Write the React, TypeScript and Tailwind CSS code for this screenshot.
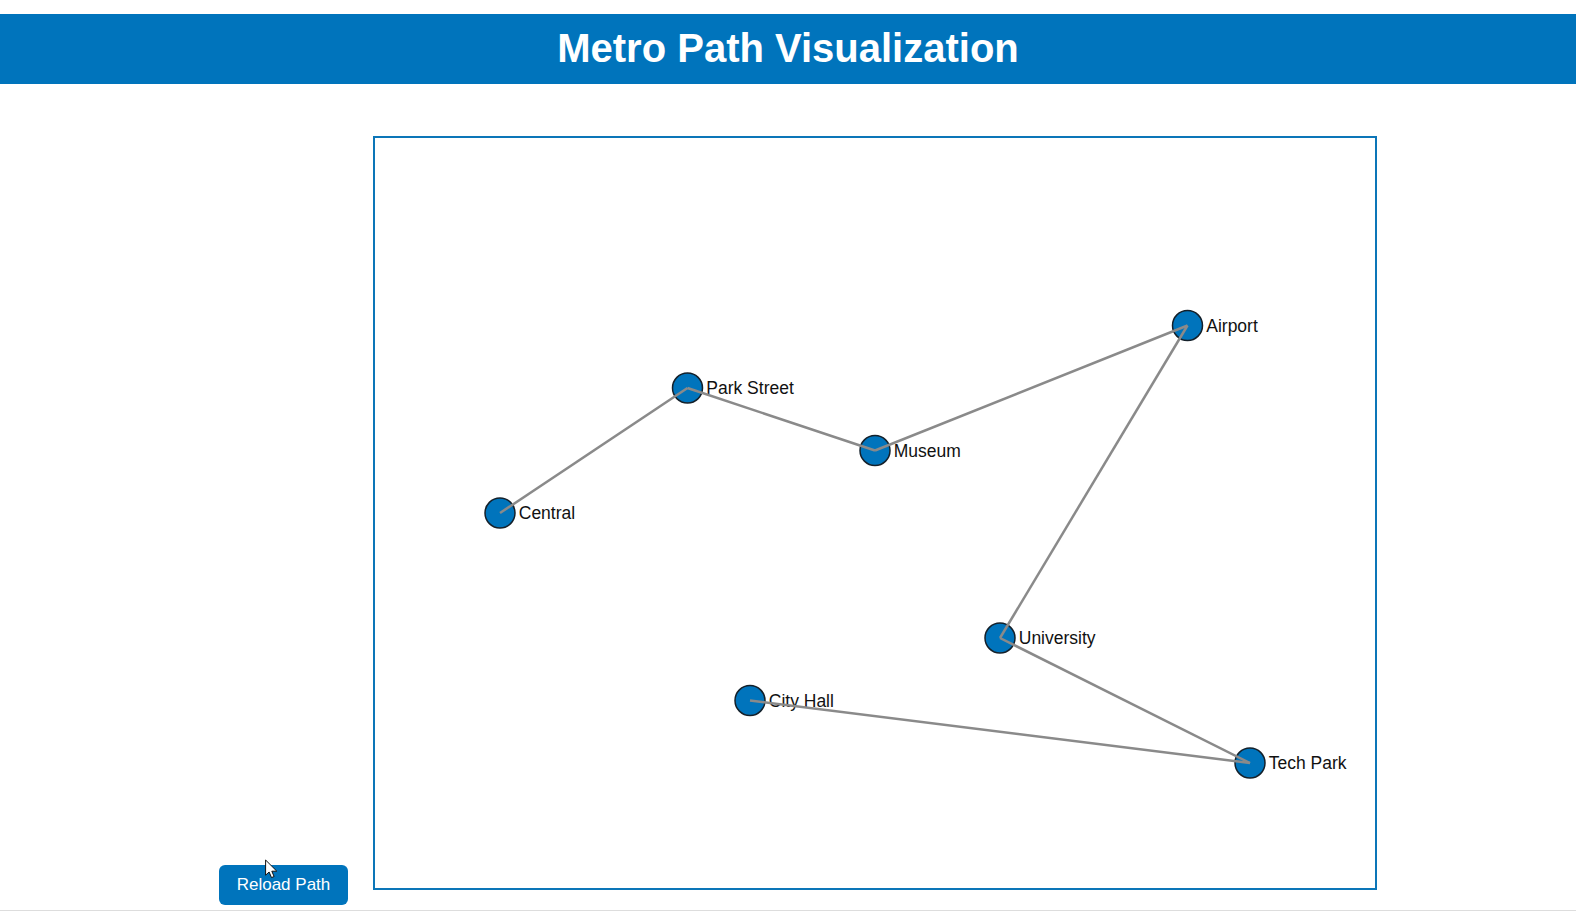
import { useState } from "react";

type Station = { name: string; x: number; y: number };

const stations: Station[] = [
  { name: "Central", x: 100, y: 300 },
  { name: "Park Street", x: 250, y: 200 },
  { name: "Museum", x: 400, y: 250 },
  { name: "Airport", x: 650, y: 150 },
  { name: "University", x: 500, y: 400 },
  { name: "Tech Park", x: 700, y: 500 },
  { name: "City Hall", x: 300, y: 450 },
];

function MetroMap() {
  return (
    <svg
      viewBox="0 0 800 600"
      role="img"
      aria-label="Metro path"
      className="block w-full"
    >
      {stations.map((s) => (
        <g key={s.name}>
          <circle cx={s.x} cy={s.y} r={12} fill="#0074bc" stroke="#14202a" strokeWidth={1.2} />
          <text x={s.x + 15} y={s.y + 5} fontSize={14} fill="#111">
            {s.name}
          </text>
        </g>
      ))}
      {stations.slice(1).map((s, i) => (
        <line
          key={s.name}
          x1={stations[i].x}
          y1={stations[i].y}
          x2={s.x}
          y2={s.y}
          stroke="#8a8a8a"
          strokeWidth={2}
        />
      ))}
    </svg>
  );
}

function Cursor() {
  return (
    <svg
      viewBox="0 0 13 20"
      aria-hidden="true"
      className="pointer-events-none absolute -top-1.5 left-[46px] h-5 w-[13px]"
    >
      <path
        d="M.6 1v15.2l3.5-3.2 2.4 5.6 2.6-1.1-2.3-5.3h5z"
        fill="#fff"
        stroke="#111"
        strokeWidth="1"
      />
    </svg>
  );
}

export default function App() {
  const [run, setRun] = useState(0);
  return (
    <div className="bg-white pt-3.5 font-['Liberation_Sans',Arial,sans-serif]">
      <header className="bg-[#0074bc] px-5 pt-3 pb-3.5 text-center text-white">
        <h1 className="text-[40px] leading-11 font-bold">Metro Path Visualization</h1>
      </header>
      <main className="flex items-end justify-center gap-[25px] border-b border-[#dddddd] pt-13 pb-[5px] pl-5">
        <div className="relative shrink-0">
          <button
            type="button"
            onClick={() => setRun(run + 1)}
            className="block h-10 rounded-md bg-[#0074bc] px-[18px] text-[17px] leading-6 text-white"
          >
            Reload Path
          </button>
          <Cursor />
        </div>
        <div className="mb-[15px] w-full max-w-[1004px] border-2 border-[#0c76b8]">
          <MetroMap key={run} />
        </div>
      </main>
    </div>
  );
}
